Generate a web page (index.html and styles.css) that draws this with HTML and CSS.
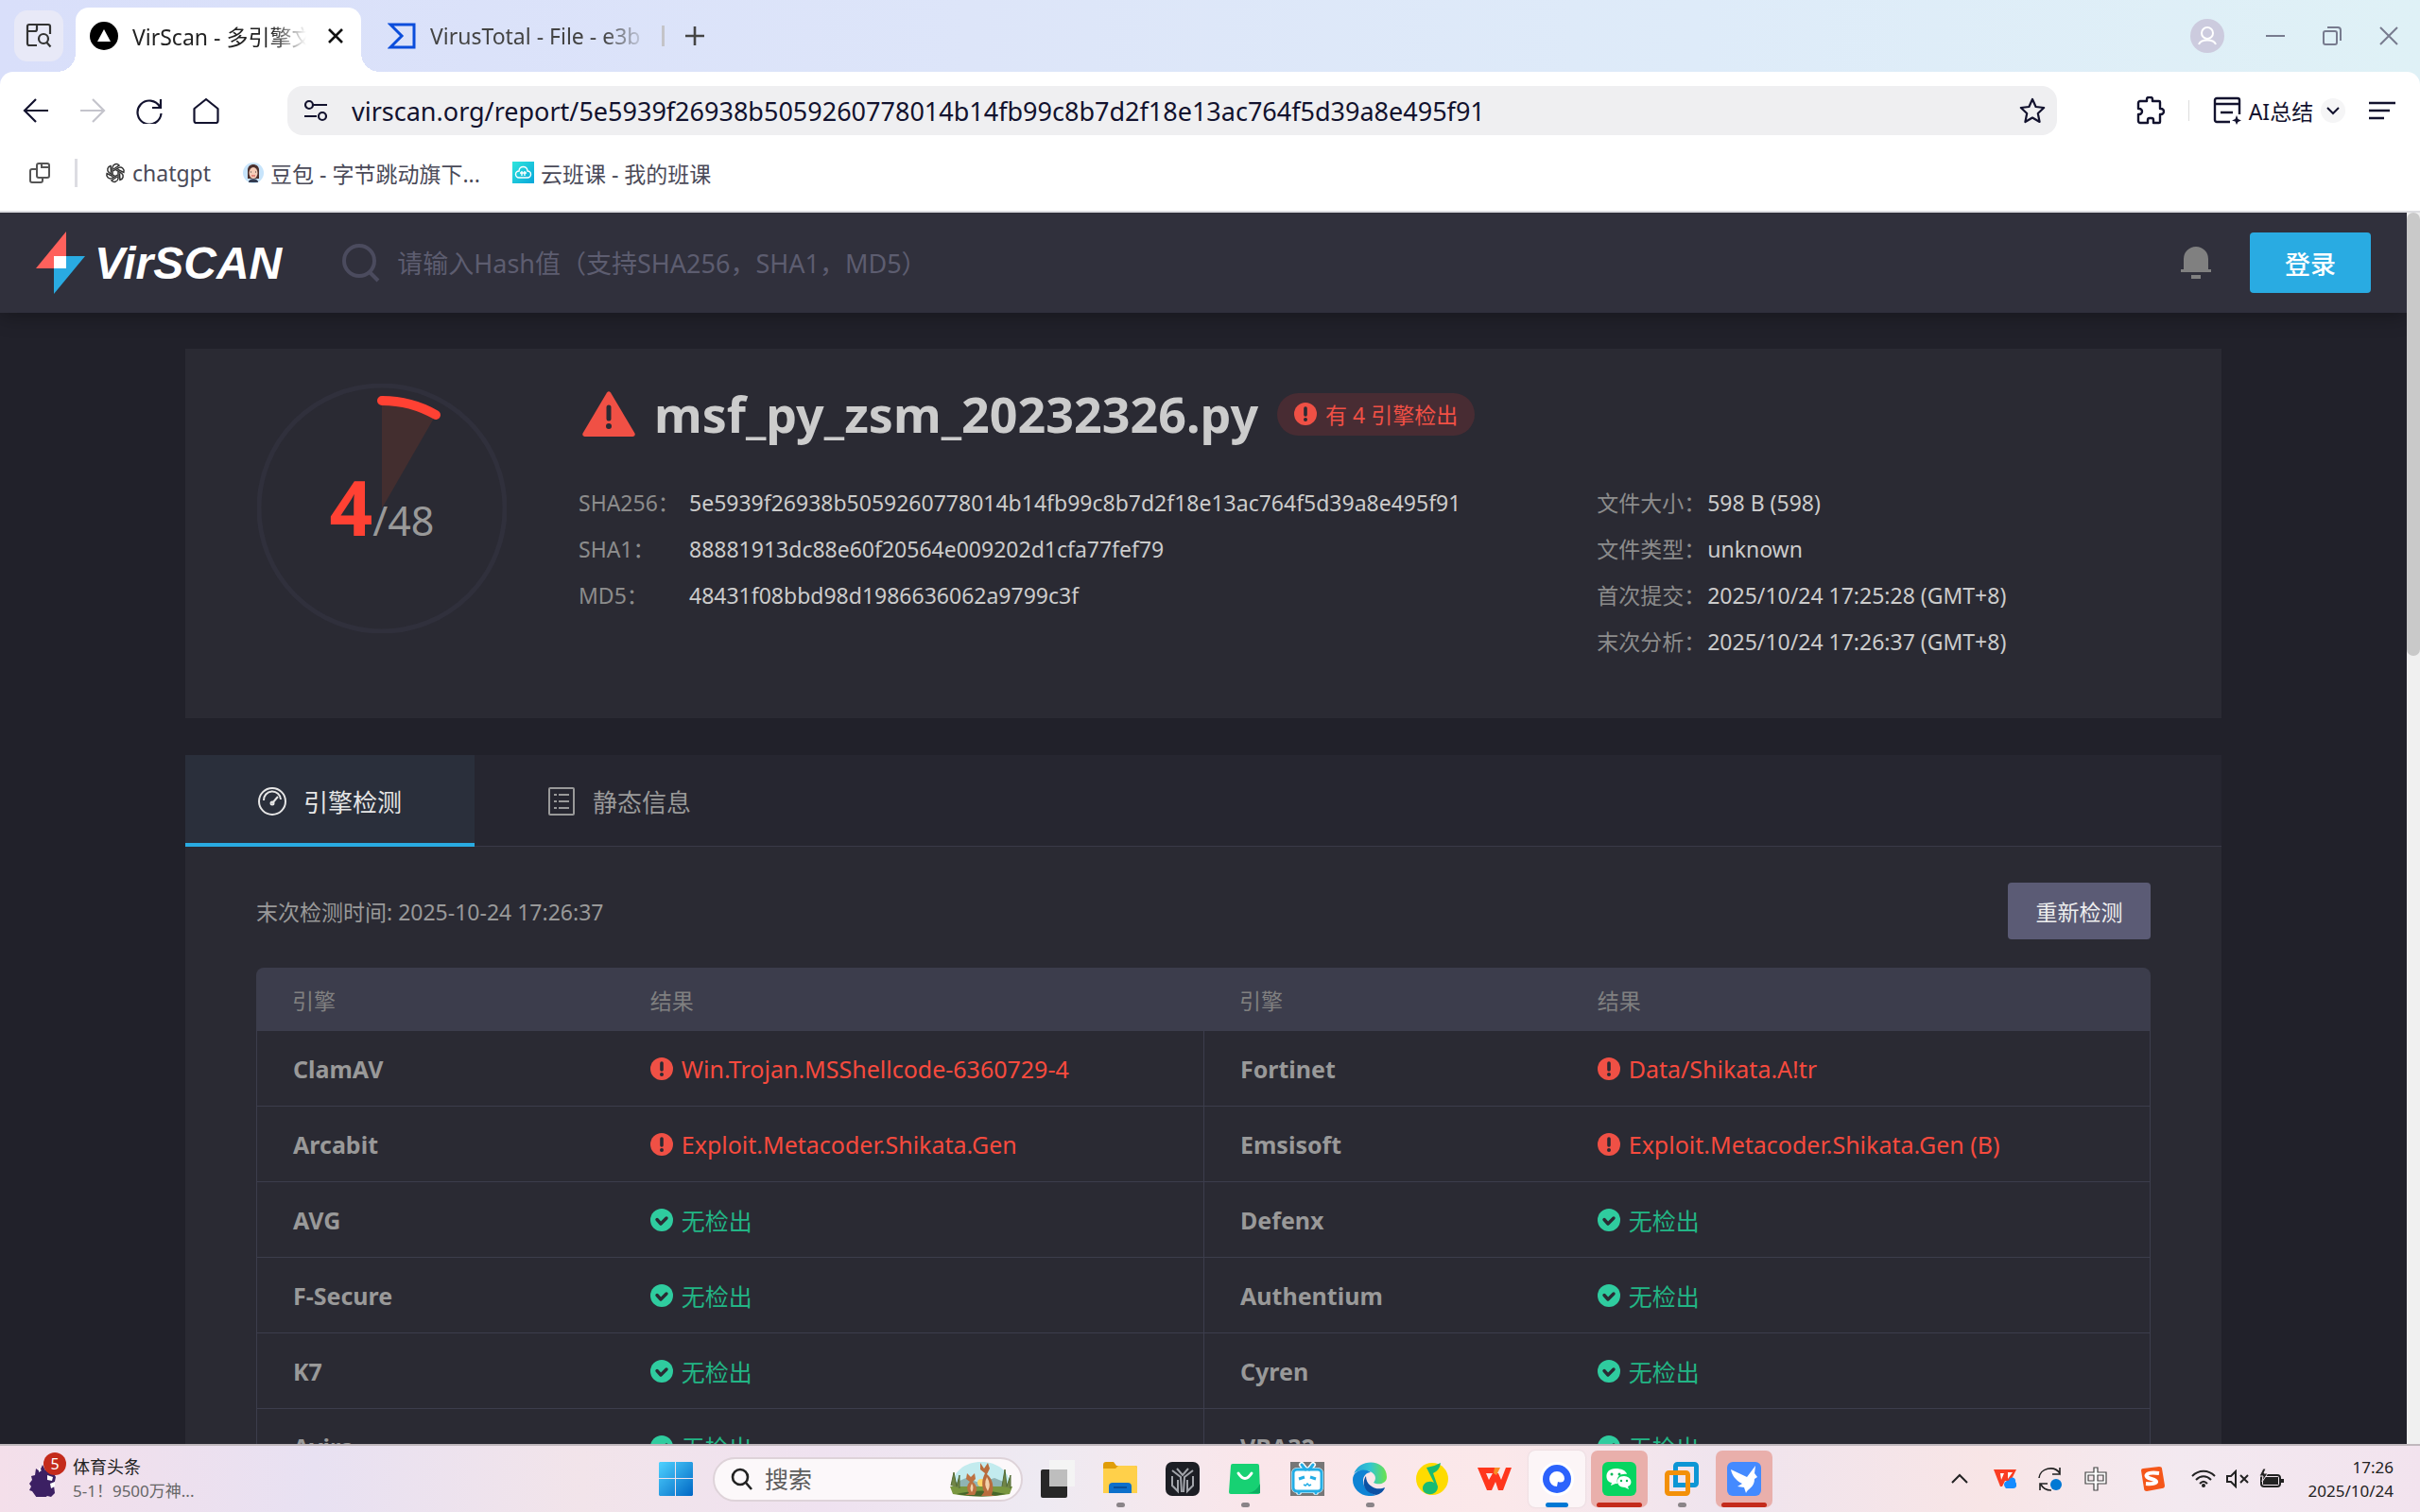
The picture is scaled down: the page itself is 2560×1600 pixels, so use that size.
FILE: index.html
```html
<!DOCTYPE html>
<html lang="zh-CN">
<head>
    <meta charset="UTF-8">
    <meta name="viewport" content="width=device-width, initial-scale=1.0">
    <title>VirScan - 多引擎文件在线检测平台</title>
    <link rel="stylesheet" href="styles.css">
</head>
<body>
    <!-- shared icons -->
    <svg class="defs" width="0" height="0" aria-hidden="true">
        <symbol id="icon-alert" viewBox="0 0 24 24">
            <circle cx="12" cy="12" r="12" fill="#f05045"/>
            <path d="M12 6v7" stroke="#2a2a33" stroke-width="3.6" stroke-linecap="round"/>
            <circle cx="12" cy="18" r="2" fill="#2a2a33"/>
        </symbol>
        <symbol id="icon-ok" viewBox="0 0 24 24">
            <circle cx="12" cy="12" r="12" fill="#2fcc9f"/>
            <path d="M7 11.500l4 4.500 6-6" fill="none" stroke="#2a2a33" stroke-width="3.400" stroke-linecap="round" stroke-linejoin="round"/>
        </symbol>
    </svg>

    <div class="browser">
        <div class="tab-strip">
            <button class="tab-search" aria-label="搜索标签页">
                <svg width="28" height="28" viewBox="0 0 28 28" fill="none" stroke="#333" stroke-width="2.200">
                    <path d="M12 24H4a2 2 0 0 1-2-2V4a2 2 0 0 1 2-2h20a2 2 0 0 1 2 2v8M2 9h8a2 2 0 0 0 2-2V2"/>
                    <circle cx="19" cy="17" r="5"/>
                    <path d="M22.500 21l4 4.500"/>
                </svg>
            </button>
            <div class="browser-tab current">
                <svg width="30" height="30" viewBox="0 0 30 30"><circle cx="15" cy="15" r="15" fill="#000"/><path d="M15 8l7 13H8z" fill="#fff"/></svg>
                <span class="tab-title">VirScan - 多引擎文</span>
                <button class="icon-button" aria-label="关闭标签页">
                    <svg width="18" height="18" viewBox="0 0 18 18" stroke="#111" stroke-width="2.600"><path d="M2 2l14 14M16 2L2 16"/></svg>
                </button>
            </div>
            <div class="browser-tab">
                <svg width="30" height="28" viewBox="0 0 30 28" fill="none" stroke="#0b4ddb" stroke-width="3"><path d="M3 2h25v24H3l12-12z"/></svg>
                <span class="tab-title">VirusTotal - File - e3b</span>
            </div>
            <span class="tab-divider"></span>
            <button class="icon-button new-tab" aria-label="新建标签页">
                <svg width="20" height="20" viewBox="0 0 20 20" stroke="#444" stroke-width="2.600"><path d="M10 0v20M0 10h20"/></svg>
            </button>
            <div class="window-controls">
                <button class="icon-button account" aria-label="账户">
                    <svg width="36" height="36" viewBox="0 0 36 36" fill="none" stroke="#fff" stroke-width="2"><circle cx="18" cy="18" r="18" fill="#cccbde" stroke="none"/><circle cx="18" cy="15" r="6"/><path d="M9 27c2-6 16-6 18 0"/></svg>
                </button>
                <button class="icon-button" aria-label="最小化">
                    <svg width="20" height="20" viewBox="0 0 20 20" stroke="#777b8e" stroke-width="2"><path d="M0 10h20"/></svg>
                </button>
                <button class="icon-button" aria-label="还原">
                    <svg width="20" height="20" viewBox="0 0 20 20" fill="none" stroke="#777b8e" stroke-width="2"><rect x="1" y="5" width="14" height="14" rx="2"/><path d="M5 1h11a3 3 0 0 1 3 3v11"/></svg>
                </button>
                <button class="icon-button" aria-label="关闭">
                    <svg width="20" height="20" viewBox="0 0 20 20" stroke="#777b8e" stroke-width="2"><path d="M1 1l18 18M19 1L1 19"/></svg>
                </button>
            </div>
        </div>

        <div class="toolbar">
            <div class="nav-buttons">
                <button class="icon-button" aria-label="后退">
                    <svg width="28" height="28" viewBox="0 0 28 28" fill="none" stroke="#12122e" stroke-width="2.200"><path d="M27 14H2M14 2L2 14l12 12"/></svg>
                </button>
                <button class="icon-button" aria-label="前进">
                    <svg width="28" height="28" viewBox="0 0 28 28" fill="none" stroke="#c4c4cc" stroke-width="2.200"><path d="M1 14h25M14 2l12 12-12 12"/></svg>
                </button>
                <button class="icon-button" aria-label="刷新">
                    <svg width="28" height="28" viewBox="0 0 28 28" fill="none" stroke="#12122e" stroke-width="2.200"><path d="M26 2v9h-9M25 10A12.500 12.500 0 1 0 26.500 17"/></svg>
                </button>
                <button class="icon-button" aria-label="主页">
                    <svg width="28" height="28" viewBox="0 0 28 28" fill="none" stroke="#12122e" stroke-width="2.200" stroke-linejoin="round"><path d="M14 2l12.500 10v13a2 2 0 0 1-2 2h-21a2 2 0 0 1-2-2V12z"/></svg>
                </button>
            </div>
            <div class="address-bar">
                <svg width="24" height="24" viewBox="0 0 24 24" fill="none" stroke="#12122e" stroke-width="2.200"><circle cx="5" cy="6" r="4"/><path d="M10 6h14M0 18h13"/><circle cx="19" cy="18" r="4"/></svg>
                <input class="url" type="text" aria-label="地址栏" value="virscan.org/report/5e5939f26938b5059260778014b14fb99c8b7d2f18e13ac764f5d39a8e495f91">
                <button class="icon-button" aria-label="收藏">
                    <svg width="28" height="28" viewBox="0 0 28 28" fill="none" stroke="#12122e" stroke-width="2.200" stroke-linejoin="round"><path d="M14 2l3.600 8 8.600 1-6.400 6 1.800 9-7.600-4.500L6.400 26l1.800-9-6.400-6 8.600-1z"/></svg>
                </button>
            </div>
            <div class="toolbar-actions">
                <button class="icon-button" aria-label="扩展">
                    <svg width="30" height="30" viewBox="0 0 30 30" fill="none" stroke="#12122e" stroke-width="2.400" stroke-linejoin="round"><path d="M4 5h7V3a2 2 0 0 1 2-2h2a2 2 0 0 1 2 2v2h7a1 1 0 0 1 1 1v7h1a3 3 0 0 1 0 6h-1v8a1 1 0 0 1-1 1h-6v-3a2 2 0 0 0-2-2h-2a2 2 0 0 0-2 2v3H4a2 2 0 0 1-2-2v-7h1a3 3 0 0 0 0-6H2V7a2 2 0 0 1 2-2z"/></svg>
                </button>
                <span class="thin-divider"></span>
                <button class="ai-summary">
                    <svg width="30" height="30" viewBox="0 0 30 30" fill="none" stroke="#12122e" stroke-width="2.400"><path d="M18 27H4a2 2 0 0 1-2-2V4a2 2 0 0 1 2-2h22a2 2 0 0 1 2 2v15M2 8h26M8 17h13"/><path d="M25 20l1.500 4 3.500 1.500-3.500 1.500L25 30l-1.500-3.500L20 25.500l3.500-1.500z" fill="#12122e" stroke="none"/></svg>
                    AI总结
                    <svg width="26" height="26" viewBox="0 0 26 26" fill="none" stroke="#12122e" stroke-width="2"><circle cx="13" cy="13" r="13" fill="#f5f5f6" stroke="none"/><path d="M7 10l6 6 6-6"/></svg>
                </button>
                <button class="icon-button" aria-label="菜单">
                    <svg width="28" height="20" viewBox="0 0 28 20" stroke="#12122e" stroke-width="2.400"><path d="M0 2h28M0 10h22M0 18h16"/></svg>
                </button>
            </div>
        </div>

        <nav class="bookmarks">
            <button class="icon-button" aria-label="书签">
                <svg width="22" height="22" viewBox="0 0 22 22" fill="none" stroke="#555" stroke-width="2"><path d="M8 7H3a2 2 0 0 0-2 2v10a2 2 0 0 0 2 2h9a2 2 0 0 0 2-2v-3"/><rect x="8" y="1" width="13" height="15" rx="2"/><path d="M13 1v4h8"/></svg>
            </button>
            <span class="bookmark-divider"></span>
            <a href="#chatgpt">
                <svg width="22" height="22" viewBox="0 0 22 22" fill="none" stroke="#333" stroke-width="1.500">
                    <g id="petal"><path d="M8 12V5a4 4 0 0 1 7-2l-6 4"/></g>
                    <use href="#petal" transform="rotate(60 11 11)"/><use href="#petal" transform="rotate(120 11 11)"/><use href="#petal" transform="rotate(180 11 11)"/><use href="#petal" transform="rotate(240 11 11)"/><use href="#petal" transform="rotate(300 11 11)"/>
                </svg>
                chatgpt
            </a>
            <a href="#doubao">
                <svg width="22" height="22" viewBox="0 0 22 22"><circle cx="11" cy="11" r="11" fill="#c7e4fb"/><path d="M5 17V8c0-8 12-8 12 0v9z" fill="#4b302d"/><ellipse cx="11" cy="11" rx="4.500" ry="6" fill="#f6cdb8"/><path d="M6 21c0-5 10-5 10 0z" fill="#333b50"/><path d="M8 10h1M13 10h1" stroke="#333"/><path d="M9 14h4" stroke="#c44"/></svg>
                豆包 - 字节跳动旗下...
            </a>
            <a href="#mosoteach">
                <svg width="23" height="23" viewBox="0 0 23 23" fill="none" stroke="#fff" stroke-width="1.400"><defs><linearGradient id="cloud-bg" x1="0" y1="0" x2="1" y2="1"><stop offset="0" stop-color="#2fe6dc"/><stop offset="1" stop-color="#08a6da"/></linearGradient></defs><path d="M0 0h23v23H0z" fill="url(#cloud-bg)" stroke="none"/><path d="M7 17a3.500 3.500 0 0 1 0-7c0-6 9-6 9 0a3.500 3.500 0 0 1 0 7zM8 12h7M10 10v5M13 10v5"/></svg>
                云班课 - 我的班课
            </a>
        </nav>
    </div>

    <div class="viewport">
        <div class="page">
            <header class="site-header">
                <a class="logo" href="#home">
                    <svg width="52" height="66" viewBox="0 0 52 66"><path d="M32 0v39H0z" fill="#ff615c"/><path d="M19 26h33L19 66z" fill="#29abe2"/><path d="M19 26h13v13H19z" fill="#fff"/></svg>
                    VirSCAN
                </a>
                <form class="site-search">
                    <svg width="40" height="42" viewBox="0 0 40 42" fill="none" stroke="#4b4b5e" stroke-width="4"><circle cx="18" cy="19" r="16"/><path d="M29 31l9 9"/></svg>
                    <input type="text" aria-label="Hash" placeholder="请输入Hash值（支持SHA256，SHA1，MD5）">
                </form>
                <button class="icon-button" aria-label="通知">
                    <svg width="32" height="36" viewBox="0 0 32 36" fill="#808080"><path d="M3 25V14a13 13 0 0 1 26 0v11h3v3H0v-3zM11 31h10v4H11z"/></svg>
                </button>
                <button class="login">登录</button>
            </header>

            <main>
                <section class="summary">
                    <svg class="gauge" width="264" height="264" viewBox="0 0 264 264">
                        <circle cx="132" cy="132" r="130" fill="none" stroke="#30303c" stroke-width="5"/>
                        <path d="M132 132V18a114 114 0 0 1 57 15z" fill="#432e2f"/>
                        <path d="M132 18a114 114 0 0 1 57 15" fill="none" stroke="#ff4133" stroke-width="10" stroke-linecap="round"/>
                        <text x="132" y="161" text-anchor="middle"><tspan class="hits">4</tspan><tspan class="total">/48</tspan></text>
                    </svg>
                    <div class="file-info">
                        <div class="file-heading">
                            <svg width="56" height="48" viewBox="0 0 56 48"><path d="M26 1.500q2-2.500 4 0l25.500 43q1 3-2 3.500h-51q-3-.5-2-3.500z" fill="#f05045"/><path d="M28 17v12" stroke="#2a2a33" stroke-width="5" stroke-linecap="round"/><circle cx="28" cy="37" r="3" fill="#2a2a33"/></svg>
                            <h1>msf_py_zsm_20232326.py</h1>
                            <span class="badge"><svg width="24" height="24"><use href="#icon-alert"/></svg>有 4 引擎检出</span>
                        </div>
                        <div class="details">
                            <dl>
                                <dt>SHA256：</dt><dd>5e5939f26938b5059260778014b14fb99c8b7d2f18e13ac764f5d39a8e495f91</dd>
                                <dt>SHA1：</dt><dd>88881913dc88e60f20564e009202d1cfa77fef79</dd>
                                <dt>MD5：</dt><dd>48431f08bbd98d1986636062a9799c3f</dd>
                            </dl>
                            <dl>
                                <dt>文件大小：</dt><dd>598 B (598)</dd>
                                <dt>文件类型：</dt><dd>unknown</dd>
                                <dt>首次提交：</dt><dd>2025/10/24 17:25:28 (GMT+8)</dd>
                                <dt>末次分析：</dt><dd>2025/10/24 17:26:37 (GMT+8)</dd>
                            </dl>
                        </div>
                    </div>
                </section>

                <section class="report">
                    <div class="report-tabs">
                        <button class="report-tab active">
                            <svg width="30" height="30" viewBox="0 0 30 30" fill="none" stroke="#e6e6e6" stroke-width="2"><circle cx="15" cy="15" r="14"/><path d="M6 14a9 9 0 0 1 18-1M15 17l6-7"/><circle cx="15" cy="17" r="1.500"/></svg>
                            引擎检测
                        </button>
                        <button class="report-tab">
                            <svg width="30" height="30" viewBox="0 0 30 30" fill="none" stroke="#999" stroke-width="2"><rect x="2" y="1" width="26" height="28" rx="1"/><path d="M7 8h3M12 8h11M7 15h3M12 15h11M7 22h3M12 22h11"/></svg>
                            静态信息
                        </button>
                    </div>
                    <div class="report-body">
                        <div class="report-bar">
                            <span>末次检测时间: 2025-10-24 17:26:37</span>
                            <button class="rescan">重新检测</button>
                        </div>
                        <table class="engines">
                            <thead>
                                <tr><th class="engine">引擎</th><th class="result">结果</th><th class="engine">引擎</th><th class="result">结果</th></tr>
                            </thead>
                            <tbody>
                                <tr>
                                    <td class="name">ClamAV</td>
                                    <td><span class="virus"><svg width="24" height="24"><use href="#icon-alert"/></svg>Win.Trojan.MSShellcode-6360729-4</span></td>
                                    <td class="name">Fortinet</td>
                                    <td><span class="virus"><svg width="24" height="24"><use href="#icon-alert"/></svg>Data/Shikata.A!tr</span></td>
                                </tr>
                                <tr>
                                    <td class="name">Arcabit</td>
                                    <td><span class="virus"><svg width="24" height="24"><use href="#icon-alert"/></svg>Exploit.Metacoder.Shikata.Gen</span></td>
                                    <td class="name">Emsisoft</td>
                                    <td><span class="virus"><svg width="24" height="24"><use href="#icon-alert"/></svg>Exploit.Metacoder.Shikata.Gen (B)</span></td>
                                </tr>
                                <tr>
                                    <td class="name">AVG</td>
                                    <td><span class="clean"><svg width="24" height="24"><use href="#icon-ok"/></svg>无检出</span></td>
                                    <td class="name">Defenx</td>
                                    <td><span class="clean"><svg width="24" height="24"><use href="#icon-ok"/></svg>无检出</span></td>
                                </tr>
                                <tr>
                                    <td class="name">F-Secure</td>
                                    <td><span class="clean"><svg width="24" height="24"><use href="#icon-ok"/></svg>无检出</span></td>
                                    <td class="name">Authentium</td>
                                    <td><span class="clean"><svg width="24" height="24"><use href="#icon-ok"/></svg>无检出</span></td>
                                </tr>
                                <tr>
                                    <td class="name">K7</td>
                                    <td><span class="clean"><svg width="24" height="24"><use href="#icon-ok"/></svg>无检出</span></td>
                                    <td class="name">Cyren</td>
                                    <td><span class="clean"><svg width="24" height="24"><use href="#icon-ok"/></svg>无检出</span></td>
                                </tr>
                                <tr>
                                    <td class="name">Avira</td>
                                    <td><span class="clean"><svg width="24" height="24"><use href="#icon-ok"/></svg>无检出</span></td>
                                    <td class="name">VBA32</td>
                                    <td><span class="clean"><svg width="24" height="24"><use href="#icon-ok"/></svg>无检出</span></td>
                                </tr>
                            </tbody>
                        </table>
                    </div>
                </section>
            </main>
        </div>
        <div class="scrollbar"><div class="thumb"></div></div>
    </div>

    <footer class="taskbar">
        <div class="news">
            <div class="news-icon">
                <svg width="32" height="38" viewBox="0 0 32 38"><path d="M7 8l4 3 3-7 3 6 6-2 5 9-2 9 1 8-4 4-4-1-4 3-7-1-5-7-3-1 2-4-2-3 3-4-1-4 4-1z" fill="#3c2063"/><path d="M19 15l6 2-1 4-5-1zM22 24l5-2v5l-4 2zM10 7l3 3-3 2z" fill="#fff"/></svg>
                <span class="news-count">5</span>
            </div>
            <div class="news-text">
                <div>体育头条</div>
                <div class="news-sub">5-1！9500万神...</div>
            </div>
        </div>

        <div class="apps">
            <button class="app" aria-label="开始">
                <svg width="36" height="36" viewBox="0 0 36 36"><defs><linearGradient id="win" x1="0" y1="0" x2="1" y2="1"><stop offset="0" stop-color="#4fd2ff"/><stop offset="1" stop-color="#0067c4"/></linearGradient></defs><path d="M1 0h16v17H0V1zM18 0h17l1 1v16H18zM0 18h17v18H1l-1-1zM18 18h18v17l-1 1H18z" fill="url(#win)"/></svg>
            </button>
            <label class="task-search">
                <svg width="24" height="24" viewBox="0 0 24 24" fill="none" stroke="#222" stroke-width="2.600"><circle cx="10" cy="10" r="8"/><path d="M16 16l6 7"/></svg>
                <input type="text" placeholder="搜索">
                <svg width="72" height="38" viewBox="0 0 72 38">
                    <path d="M5 30C4 12 18 1 36 1s32 11 31 29z" fill="#c3ebee"/>
                    <path d="M6 24l14-6 14 5 16-5 17 7v6H6z" fill="#8fb4b4"/>
                    <circle cx="36" cy="23" r="4" fill="#ffd667"/>
                    <path d="M3 27h66l-3 8q-30 5-60 0z" fill="#79963f"/>
                    <path d="M10 35q26-7 52 0-26 5-52 0z" fill="#47662a"/>
                    <path d="M4 26l3-14 3 15 3-12v14M58 27l3-18 2 18 4-12v14" fill="#718547" stroke="#536b35"/>
                    <path d="M35 2l4 6 4-6 2 6-3 6c6 5 8 13 5 22l4 1H36l3-4c-3-8-2-14 1-20l-5-4z" fill="#b96c3d"/>
                    <path d="M21 13l4 4 4-4 1 6-3 3c5 4 5 9 2 14H19l4-2c-3-5-2-9 1-12l-4-3z" fill="#bd7141"/>
                    <path d="M42 17q5 8 1 15-5-7-1-15zM26 24q3 4 0 9-3-4 0-9z" fill="#f2d2ac"/>
                </svg>
            </label>
            <div class="app-list">
                <button class="app" aria-label="任务视图">
                    <svg width="36" height="42" viewBox="0 0 36 42"><rect x="0" y="11" width="28" height="30" rx="2" fill="#272727"/><path d="M9 1h27v28H9z" fill="#f4f4f4"/><path d="M9 11h19v18H9z" fill="#bebebe"/></svg>
                </button>
                <button class="app running" aria-label="文件资源管理器">
                    <svg width="36" height="36" viewBox="0 0 36 36"><path d="M0 3q0-3 3-3h8l3 4h20q2 0 2 2v27H0z" fill="#e09d08"/><path d="M0 7h13l3-3h18q2 0 2 2v27H0z" fill="#ffd04a"/><path d="M6 33v-7q0-4 4-4h16q4 0 4 4v7z" fill="#0d70cb"/><path d="M11 27h14" stroke="#084f9a" stroke-width="2"/></svg>
                </button>
                <button class="app" aria-label="控制台">
                    <svg width="36" height="36" viewBox="0 0 36 36"><rect width="36" height="36" rx="7" fill="#1c1e24"/><path d="M7 9l9 7 1 16M29 9l-9 7-1 16M12 7l6 7 6-7M7 15v10l6 6V19M29 15v10l-6 6V19" fill="none" stroke="#a2a5ab" stroke-width="2"/></svg>
                </button>
                <button class="app running" aria-label="应用商店">
                    <svg width="34" height="34" viewBox="0 0 34 34"><path d="M4 1h26q2 0 2 2l1 28q0 2-2 2H2q-2 0-2-2L2 3q0-2 2-2z" fill="#17d173"/><path d="M33 22v10H20q9-1 13-10z" fill="#0bad61"/><path d="M10 11q7 11 14 0" fill="none" stroke="#fff" stroke-width="3" stroke-linecap="round"/></svg>
                </button>
                <button class="app" aria-label="哔哩哔哩">
                    <svg width="36" height="36" viewBox="0 0 36 36"><path d="M0 0h36v36H0z" fill="#777"/><g stroke="#fff" stroke-width="6" stroke-linejoin="round" stroke-linecap="round" fill="#fff"><rect x="4" y="9" width="28" height="21" rx="3"/><path d="M12 3l4 5M24 3l-4 5M9 31v1M27 31v1"/></g><g stroke="#23ade5" stroke-width="3" stroke-linecap="round" fill="none"><rect x="3" y="8" width="30" height="23" rx="4"/><path d="M12 3l4 5M24 3l-4 5M9 32v1M27 32v1"/></g><path d="M9 18l6-2M27 18l-6-2" stroke="#23ade5" stroke-width="3"/><path d="M14 24l2 1 2-2 2 2 2-1" stroke="#23ade5" stroke-width="1.500" fill="none"/></svg>
                </button>
                <button class="app running" aria-label="Edge">
                    <svg width="36" height="36" viewBox="0 0 36 36"><defs><linearGradient id="edge" x1="0" y1="0" x2="1" y2="0"><stop offset="0" stop-color="#249fd9"/><stop offset=".5" stop-color="#32c6d0"/><stop offset="1" stop-color="#6be34b"/></linearGradient></defs><path d="M1 13C7-5 36-3 36 16c0 7-9 9-14 6 6-8-3-14-11-13-5 0-9 2-10 4z" fill="url(#edge)"/><path d="M0 19C0 9 12 6 19 11c-6 0-10 7-7 14 3 6 10 10 13 10C12 39 0 31 0 19z" fill="#0f83d4"/><path d="M14 15c-5 7-2 18 11 20 4-1 8-4 9-8-8 4-20-1-20-12z" fill="#0c51a4"/></svg>
                </button>
                <button class="app" aria-label="QQ音乐">
                    <svg width="36" height="36" viewBox="0 0 36 36"><circle cx="18" cy="18" r="17" fill="#fedb00"/><path d="M12 6q8-1 15-5-1 8-8 11l5 14c0 11-16 10-16 2 0-6 7-9 12-6z" fill="#18bb73"/></svg>
                </button>
                <button class="app" aria-label="WPS">
                    <svg width="36" height="26" viewBox="0 0 36 26"><path d="M0 1h21l-2 6H9l3 7 4-7h6l3 7 5-13h6l-9 24h-5l-3-9-4 9h-5z" fill="#ff361c"/><path d="M18 1h6l-4 8-3-2z" fill="#f78d25"/></svg>
                </button>
                <button class="app current" aria-label="夸克">
                    <svg width="36" height="36" viewBox="0 0 36 36"><circle cx="18" cy="18" r="18" fill="#fff"/><circle cx="18" cy="18" r="15" fill="#2c63fc"/><path d="M26 18a8 8 0 1 0-8 8l1-5q6 2 7-3z" fill="#fff"/></svg>
                </button>
                <button class="app alerting" aria-label="微信">
                    <svg width="36" height="36" viewBox="0 0 36 36"><rect width="36" height="36" rx="6" fill="#07d561"/><path d="M14 7c-13 0-11 15-4 15l-1 3 5-2h2c-2-8 4-11 10-10-1-4-6-6-12-6z" fill="#fff"/><path d="M23 15c-10 0-9 12 1 12l4 2-1-3c6-2 4-11-4-11z" fill="#fff"/><g fill="#08b958"><circle cx="10" cy="13" r="1.500"/><circle cx="18" cy="13" r="1.500"/><circle cx="20" cy="20" r="1.200"/><circle cx="26" cy="20" r="1.200"/></g></svg>
                </button>
                <button class="app running" aria-label="VMware">
                    <svg width="36" height="36" viewBox="0 0 36 36" fill="none" stroke-width="5"><rect x="11.500" y="2.500" width="22" height="22" rx="2" stroke="#0d96d5"/><rect x="2.500" y="11.500" width="22" height="22" rx="2" stroke="#f39008"/><path d="M11.500 15v9.500H20" stroke="#0d96d5"/></svg>
                </button>
                <button class="app alerting" aria-label="迅雷">
                    <svg width="36" height="36" viewBox="0 0 36 36"><rect width="36" height="36" rx="6" fill="#448aff"/><path d="M4 8l17 8 9-12-1 8 3 4-3 2c0 9-7 10-9 15l-2-6-7-1 5-3C8 19 5 13 4 8z" fill="#fff"/></svg>
                </button>
            </div>
        </div>

        <div class="tray">
            <button class="tray-item wide" aria-label="显示隐藏的图标"><svg width="18" height="12" viewBox="0 0 18 12" fill="none" stroke="#222" stroke-width="2"><path d="M1 10l8-8 8 8"/></svg></button>
            <button class="tray-item wide" aria-label="WPS云"><svg width="24" height="22" viewBox="0 0 24 22"><path d="M0 1h24l-6 12h-6l-3 6H7z" fill="#fa3d22"/><path d="M7 5h4l-3 7zM15 4h5l-5 7z" fill="#fff"/><path d="M13 21c-5-5 1-9 3-8 2-6 8-3 7 1 3 4 0 7-2 7z" fill="#168cff"/></svg></button>
            <button class="tray-item wide" aria-label="同步"><svg width="26" height="26" viewBox="0 0 26 26" fill="none" stroke="#222" stroke-width="1.600"><path d="M1 12A12 11 0 0 1 23 7V1M23 8h-8M2 25v-7h8M3 19a12 11 0 0 0 11 6"/><circle cx="19" cy="19" r="6" fill="#0078d4" stroke="none"/></svg></button>
            <button class="tray-item wide" aria-label="中"><svg width="24" height="26" viewBox="0 0 24 26" fill="#fff" fill-rule="evenodd" stroke="#444" stroke-width="1.200"><path d="M10 1h4v5h9v12h-9v7h-4v-7H1V6h9zM4 9v6h6V9zM14 9v6h6V9z"/></svg></button>
            <button class="tray-item sogou" aria-label="搜狗输入法"><svg width="26" height="26" viewBox="0 0 26 26"><path d="M1 4q0-2 2-2L20 0q3 0 3 2l3 18q0 3-3 3L7 26q-3 0-3-3z" fill="#f55619"/><path d="M20 7c-15-2-17 4-8 6 8 2 7 6-6 5" fill="none" stroke="#fff" stroke-width="4"/></svg></button>
            <button class="tray-item" aria-label="网络"><svg width="26" height="20" viewBox="0 0 26 20" fill="none" stroke="#222" stroke-width="2"><path d="M1 7c7-7 17-7 24 0M5 11c5-5 11-5 16 0M9 15c3-3 5-3 8 0"/><circle cx="13" cy="17" r="2" fill="#222" stroke="none"/></svg></button>
            <button class="tray-item" aria-label="音量"><svg width="24" height="20" viewBox="0 0 24 20" fill="none" stroke="#222" stroke-width="2"><path d="M1 7h4l5-5v16l-5-5H1zM15 6l8 8M23 6l-8 8"/></svg></button>
            <button class="tray-item" aria-label="电池"><svg width="26" height="22" viewBox="0 0 26 22"><rect x="2" y="7" width="20" height="12" rx="3" fill="none" stroke="#222" stroke-width="2"/><rect x="5" y="10" width="14" height="6" fill="#222" stroke="#222" stroke-width="2"/><path d="M23 11h3v4h-3z" fill="#222"/><path d="M4 0L0 8h4l-1 6 6-9H5l2-5z" fill="#222" stroke="#f3e6ee"/></svg></button>
            <div class="clock">
                <div>17:26</div>
                <div>2025/10/24</div>
            </div>
        </div>
    </footer>
</body>
</html>
```

FILE: styles.css
```css
* {
    box-sizing: border-box;
}

body {
    font-family: "Noto Sans", "Noto Sans CJK SC", sans-serif;
    margin: 0;
    height: 100vh;
    display: flex;
    flex-direction: column;
    overflow: hidden;
    color: #ccc;
    background-color: #21212a;
}

button, input {
    font-family: inherit;
    border: none;
    background: none;
    padding: 0;
    margin: 0;
    outline: none;
}

button {
    cursor: pointer;
}

a {
    text-decoration: none;
}

svg {
    flex-shrink: 0;
    display: block;
}

.defs {
    position: absolute;
}

.icon-button {
    display: flex;
    align-items: center;
    justify-content: center;
}

/* browser window */
.browser {
    background: linear-gradient(90deg, #d9dffa, #dde5f9 40%, #deebf9 70%, #dff1f6);
}

.tab-strip {
    display: flex;
    align-items: center;
    height: 76px;
    padding-left: 15px;
}

.tab-search {
    display: flex;
    align-items: center;
    justify-content: center;
    width: 52px;
    height: 54px;
    margin-right: 13px;
    border-radius: 14px;
    background-color: #e8e9f7;
}

.browser-tab {
    display: flex;
    align-items: center;
    height: 68px;
    margin-top: 8px;
    padding: 0 15px 8px 28px;
    color: #444;
}

.browser-tab.current {
    position: relative;
    width: 302px;
    padding: 0 18px 8px 15px;
    color: #222;
    background-color: #fff;
    border-radius: 14px 14px 0 0;
}

.browser-tab.current::before,
.browser-tab.current::after {
    content: "";
    position: absolute;
    bottom: 0;
    width: 20px;
    height: 20px;
}

.browser-tab.current::before {
    right: 100%;
    background: radial-gradient(circle at 0 0, transparent 20px, #fff 20px);
}

.browser-tab.current::after {
    left: 100%;
    background: radial-gradient(circle at 100% 0, transparent 20px, #fff 20px);
}

.tab-title {
    width: 230px;
    margin-left: 15px;
    font-size: 23px;
    white-space: nowrap;
    overflow: hidden;
    mask-image: linear-gradient(90deg, #000 80%, transparent);
}

.current .tab-title {
    flex: 1;
    margin-right: 22px;
}

.tab-divider {
    width: 3px;
    height: 22px;
    background-color: #c4c4c8;
}

.new-tab {
    margin-left: 22px;
}

.window-controls {
    display: flex;
    align-items: center;
    gap: 40px;
    margin-left: auto;
    padding-right: 23px;
}

.account {
    margin-right: 4px;
}

.toolbar {
    display: flex;
    align-items: center;
    height: 82px;
    padding: 0 26px 0 24px;
    background-color: #fff;
    border-radius: 14px 14px 0 0;
}

.nav-buttons {
    display: flex;
    gap: 32px;
    width: 280px;
}

.address-bar {
    flex: 1;
    display: flex;
    align-items: center;
    height: 52px;
    padding: 0 12px 0 18px;
    border-radius: 16px;
    background-color: #efeff1;
}

.url {
    flex: 1;
    margin-left: 26px;
    font-size: 27px;
    color: #12122e;
}

.toolbar-actions {
    display: flex;
    align-items: center;
    justify-content: space-between;
    width: 358px;
    padding-left: 84px;
}

.thin-divider {
    width: 1px;
    height: 22px;
    background-color: #ddd;
}

.ai-summary {
    display: flex;
    align-items: center;
    gap: 8px;
    font-size: 23px;
    color: #12122e;
}

.bookmarks {
    display: flex;
    align-items: center;
    height: 67px;
    padding: 0 31px 16px;
    background-color: #fff;
    border-bottom: 2px solid #dddde1;
}

.bookmarks a {
    display: flex;
    align-items: center;
    gap: 7px;
    margin-right: 34px;
    font-size: 23px;
    color: #4a4a58;
}

.bookmark-divider {
    width: 3px;
    height: 30px;
    margin: 0 29px 0 26px;
    background-color: #dcdce2;
}

/* page */
.viewport {
    flex: 1;
    min-height: 0;
    display: flex;
}

.page {
    flex: 1;
    overflow: hidden;
}

.scrollbar {
    width: 14px;
    background-color: #f0f0f0;
}

.thumb {
    height: 36%;
    background-color: #c9c9c9;
    border-radius: 7px;
}

.site-header {
    position: relative;
    display: flex;
    align-items: center;
    height: 106px;
    padding: 0 38px;
    background-color: #30303c;
    box-shadow: 0 4px 20px rgba(0, 0, 0, 0.3);
}

.logo {
    display: flex;
    align-items: center;
    gap: 10px;
    font-family: "Liberation Sans", sans-serif;
    font-size: 48px;
    font-weight: bold;
    font-style: italic;
    color: #fff;
}

.site-search {
    flex: 1;
    display: flex;
    align-items: center;
    gap: 18px;
    margin-left: 64px;
}

.site-search input {
    flex: 1;
    font-size: 27px;
    color: #ccc;
}

.site-search input::placeholder {
    color: #5d5d70;
}

.login {
    width: 128px;
    height: 64px;
    margin-left: 41px;
    border-radius: 4px;
    font-size: 27px;
    font-weight: 500;
    color: #fff;
    background-color: #29abe2;
}

main {
    padding: 38px 196px 0;
}

.summary {
    display: flex;
    padding: 37px 76px 56px;
    background-color: #2a2a33;
}

.hits {
    font-size: 80px;
    font-weight: bold;
    fill: #ff4133;
}

.total {
    font-size: 43px;
    fill: #999;
}

.file-info {
    flex: 1;
    margin-left: 76px;
}

.file-heading {
    display: flex;
    align-items: center;
    height: 64px;
    padding-left: 4px;
}

h1 {
    margin: 0 20px;
    font-size: 52px;
    line-height: 64px;
}

.badge {
    display: flex;
    align-items: center;
    gap: 9px;
    height: 45px;
    padding: 0 18px;
    border-radius: 23px;
    font-size: 23px;
    color: #f05045;
    background-color: #482c33;
}

.details {
    display: grid;
    grid-template-columns: 35fr 19fr;
    margin-top: 38px;
}

dl {
    display: grid;
    grid-template-columns: 117px 1fr;
    grid-auto-rows: 49px;
    align-content: start;
    margin: 0;
    font-size: 23px;
    line-height: 49px;
    white-space: nowrap;
}

dt {
    color: #8c8c8c;
}

dd {
    margin: 0;
}

.report {
    margin-top: 39px;
    background-color: #2a2a33;
}

.report-tabs {
    display: flex;
    height: 97px;
    border-bottom: 1px solid #3a3a48;
    background-color: #262630;
}

.report-tab {
    display: flex;
    align-items: center;
    gap: 18px;
    height: 97px;
    padding: 0 77px;
    font-size: 26px;
    color: #999;
}

.report-tab.active {
    color: #e6e6e6;
    background-color: #2a2f3b;
    box-shadow: inset 0 -4px #29abe2;
}

.report-body {
    padding: 38px 75px;
}

.report-bar {
    display: flex;
    align-items: center;
    justify-content: space-between;
    margin-bottom: 30px;
    font-size: 23px;
    color: #999;
}

.rescan {
    width: 151px;
    height: 60px;
    border-radius: 4px;
    font-size: 23px;
    color: #eee;
    background-color: #5b5b75;
}

.engines {
    width: 100%;
    table-layout: fixed;
    border-collapse: separate;
    border-spacing: 0;
    border-radius: 8px 8px 0 0;
    overflow: hidden;
}

.engines th {
    height: 67px;
    padding: 0 38px;
    font-size: 23px;
    font-weight: normal;
    text-align: left;
    color: #808080;
    background-color: #3c3d4c;
}

.engine {
    width: 18.9%;
}

.result {
    width: 31.1%;
}

.engines td {
    height: 80px;
    padding: 0 38px;
    font-size: 25px;
    border-bottom: 1px solid #3c3d4c;
}

.engines td:nth-child(odd) {
    border-left: 1px solid #3c3d4c;
}

.engines td:last-child {
    border-right: 1px solid #3c3d4c;
}

.engines .name {
    font-weight: bold;
    color: #999;
}

.virus, .clean {
    display: flex;
    align-items: center;
    gap: 9px;
    white-space: nowrap;
}

.virus {
    color: #f74a3e;
}

.clean {
    color: #22b585;
}

/* taskbar */
.taskbar {
    display: grid;
    grid-template-columns: 1fr auto 1fr;
    height: 72px;
    border-top: 2px solid #c0b8bd;
    color: #222;
    background: linear-gradient(90deg, #f4dfea, #e8e1f2 13%, #f2e4ea 24%, #efe2f0 34%, #eeeaf2 43%, #fae6ea 52%, #fbe8ea 62%, #efe4ee 71%, #f8e5e6 82%, #f3e9f0 90%, #f2e3ee);
}

.news {
    display: flex;
    align-items: center;
    gap: 14px;
    padding-left: 31px;
}

.news-icon {
    position: relative;
}

.news-count {
    position: absolute;
    top: -9px;
    right: -7px;
    width: 24px;
    height: 24px;
    border-radius: 50%;
    font-size: 16px;
    line-height: 24px;
    text-align: center;
    color: #fff;
    background-color: #c42b1c;
}

.news-text {
    font-size: 18px;
    line-height: 25px;
}

.news-sub {
    font-size: 17px;
    color: #666;
}

.apps {
    display: flex;
    align-items: center;
}

.app {
    position: relative;
    display: flex;
    align-items: center;
    justify-content: center;
    width: 60px;
    height: 60px;
    margin: 0 3px;
    border-radius: 7px;
}

.task-search {
    display: flex;
    align-items: center;
    width: 328px;
    height: 47px;
    margin: 0 4px 0 6px;
    padding: 0 6px 0 17px;
    border: 2px solid #ded3d9;
    border-radius: 24px;
    background-color: #fcf8fa;
}

.task-search input {
    flex: 1;
    min-width: 0;
    margin-left: 12px;
    font-size: 25px;
}

.task-search input::placeholder {
    color: #5c5c5c;
}

.app-list {
    display: flex;
}

/* open-window markers under the icons */
.app.running::after,
.app.current::after,
.app.alerting::after {
    content: "";
    position: absolute;
    bottom: 0;
    width: 9px;
    height: 5px;
    border-radius: 3px;
    background-color: #8a8488;
}

.app.current {
    background-color: #fcf5f7;
    box-shadow: 0 0 2px #d8ccd1;
}

.app.current::after {
    width: 24px;
    background-color: #0078d4;
}

.app.alerting {
    background-color: #e9afab;
}

.app.alerting::after {
    width: 48px;
    background-color: #c42b1c;
}

.tray {
    display: flex;
    align-items: center;
    justify-content: flex-end;
    padding-right: 28px;
}

.tray-item {
    display: flex;
    align-items: center;
    justify-content: center;
    width: 36px;
    height: 48px;
}

.tray-item.wide {
    width: 48px;
}

.tray-item.sogou {
    width: 72px;
}

.clock {
    width: 111px;
    font-size: 17px;
    line-height: 25px;
    text-align: right;
}
```
